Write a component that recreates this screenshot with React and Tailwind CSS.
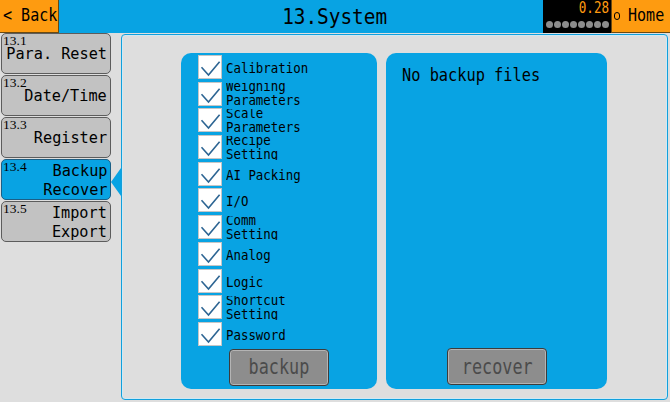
import React from 'react';

const mono = "font-['DejaVu_Sans_Mono',monospace]";

const menu = [
    { no: '13.1', lines: ['Para. Reset'] },
    { no: '13.2', lines: ['Date/Time'] },
    { no: '13.3', lines: ['Register'] },
    { no: '13.4', lines: ['Backup', 'Recover'], active: true },
    { no: '13.5', lines: ['Import', 'Export'] },
];

const items = [
    ['Calibration'],
    ['Weighing', 'Parameters'],
    ['Scale', 'Parameters'],
    ['Recipe', 'Setting'],
    ['AI Packing'],
    ['I/O'],
    ['Comm', 'Setting'],
    ['Analog'],
    ['Logic'],
    ['Shortcut', 'Setting'],
    ['Password'],
];

const MenuButton = ({ item }) => (
    <div
        className={`relative w-[110px] h-[41px] rounded-[5px] border flex items-center justify-end pr-[3px] ${
            item.active ? 'bg-[#08a3e3] border-[#1b5f86]' : 'bg-[#c2c2c2] border-[#5c5c5c]'
        }`}
    >
        <span className="absolute left-[1px] top-0 text-[13.5px] leading-[13px] text-black font-['Liberation_Serif',serif]">
            {item.no}
        </span>
        <span className={`inline-block origin-right scale-x-[0.95] text-right text-[16px] leading-[19px] text-black ${mono}`}>
            {item.lines.map((l) => (
                <div key={l} className="whitespace-pre">{l}</div>
            ))}
        </span>
        {item.active && (
            <span className="absolute right-[-11px] top-[8px] w-0 h-0 border-y-[14px] border-y-transparent border-r-[10px] border-r-[#08a3e3]" />
        )}
    </div>
);

const CheckRow = ({ lines }) => (
    <div className="h-[26.7px] flex items-start gap-[4px]">
        <div className="w-[24px] h-[24px] bg-white border border-[#c6c6c6] flex-shrink-0">
            <svg width="22" height="22" viewBox="0 0 22 22">
                <path d="M2.5 11.3 L9.5 19 L20.6 5.7" fill="none" stroke="#2d6593" strokeWidth="1.6" />
            </svg>
        </div>
        <div className={`mt-[1px] h-[24px] overflow-hidden flex items-center ${lines.length > 1 ? 'pb-[3px]' : ''}`}>
            <span className={`inline-block origin-left scale-x-[0.85] text-[14.6px] leading-[14px] text-black ${mono}`}>
                {lines.map((l) => (
                    <div key={l} className="whitespace-pre">{l}</div>
                ))}
            </span>
        </div>
    </div>
);

const GrayButton = ({ label, className }) => (
    <div
        className={`w-[100px] h-[37px] rounded-[4px] border border-[#3c3c3c] bg-[#8d8d8d] shadow-[inset_0_0_0_1px_#b4b4b4] flex items-center justify-center ${className}`}
    >
        <span className={`inline-block scale-x-[0.8] text-[21px] leading-[24px] text-[#4b4b4b] ${mono}`}>{label}</span>
    </div>
);

export default function App() {
    return (
        <div className="w-[670px] h-[402px] bg-[#dedede] overflow-hidden">
            {/* Header */}
            <div className="h-[33px] bg-[#08a3e3] grid grid-cols-[1fr_auto_1fr] items-center">
                <div className="h-full flex">
                    <div className="w-[59px] h-full bg-[#fe9b10] border-r border-b border-[#6a4a12] flex items-center pl-[3px]">
                        <span className={`inline-block origin-left scale-x-[0.86] text-[17.5px] leading-none text-black whitespace-pre ${mono}`}>
                            {'< Back'}
                        </span>
                    </div>
                </div>
                <div className="flex justify-center">
                    <span className={`inline-block scale-x-[0.88] text-[22px] leading-none text-black ${mono}`}>13.System</span>
                </div>
                <div className="h-full flex justify-end">
                    <div className="w-[68px] h-full bg-black flex flex-col items-end pr-[2px] pt-[1px]">
                        <span className={`inline-block origin-right scale-x-[0.84] text-[15px] leading-[15px] text-[#ff9a10] ${mono}`}>0.28</span>
                        <div className="flex gap-px mt-[5px]">
                            {Array.from({ length: 8 }).map((_, i) => (
                                <span key={i} className="w-[7px] h-[7px] rounded-full bg-[#8c8c8c]" />
                            ))}
                        </div>
                    </div>
                    <div className="w-[59px] h-full bg-[#fe9b10] border-l border-b border-[#6a4a12] flex items-center pl-[2px] gap-[8px]">
                        <span className="w-[8px] h-[8px] rounded-full border border-black" />
                        <span className={`inline-block origin-left scale-x-[0.86] text-[17.5px] leading-none text-black ${mono}`}>Home</span>
                    </div>
                </div>
            </div>

            {/* Body */}
            <div className="flex">
                <div className="w-[111px] pl-px flex flex-col gap-px">
                    {menu.map((m) => (
                        <MenuButton key={m.no} item={m} />
                    ))}
                </div>

                <div className="ml-[10px] mt-px w-[547px] h-[366px] rounded-[4px] border border-[#12a0dc] shadow-[inset_0_0_0_1px_#cfe9f5] flex pt-[18px] pl-[59px] gap-[9px]">
                    <div className="w-[196px] h-[336px] bg-[#08a3e3] rounded-[10px] flex flex-col pt-[2px] pl-[17px]">
                        {items.map((lines) => (
                            <CheckRow key={lines.join('-')} lines={lines} />
                        ))}
                        <GrayButton label="backup" className="ml-[31px] mt-[0px]" />
                    </div>
                    <div className="w-[221px] h-[336px] bg-[#08a3e3] rounded-[10px] flex flex-col pt-[12px] pl-[16px]">
                        <span className={`inline-block origin-left scale-x-[0.9] text-[17px] leading-[20px] text-black whitespace-pre ${mono}`}>
                            No backup files
                        </span>
                        <GrayButton label="recover" className="ml-[45px] mt-auto mb-[4px]" />
                    </div>
                </div>
            </div>
        </div>
    );
}
